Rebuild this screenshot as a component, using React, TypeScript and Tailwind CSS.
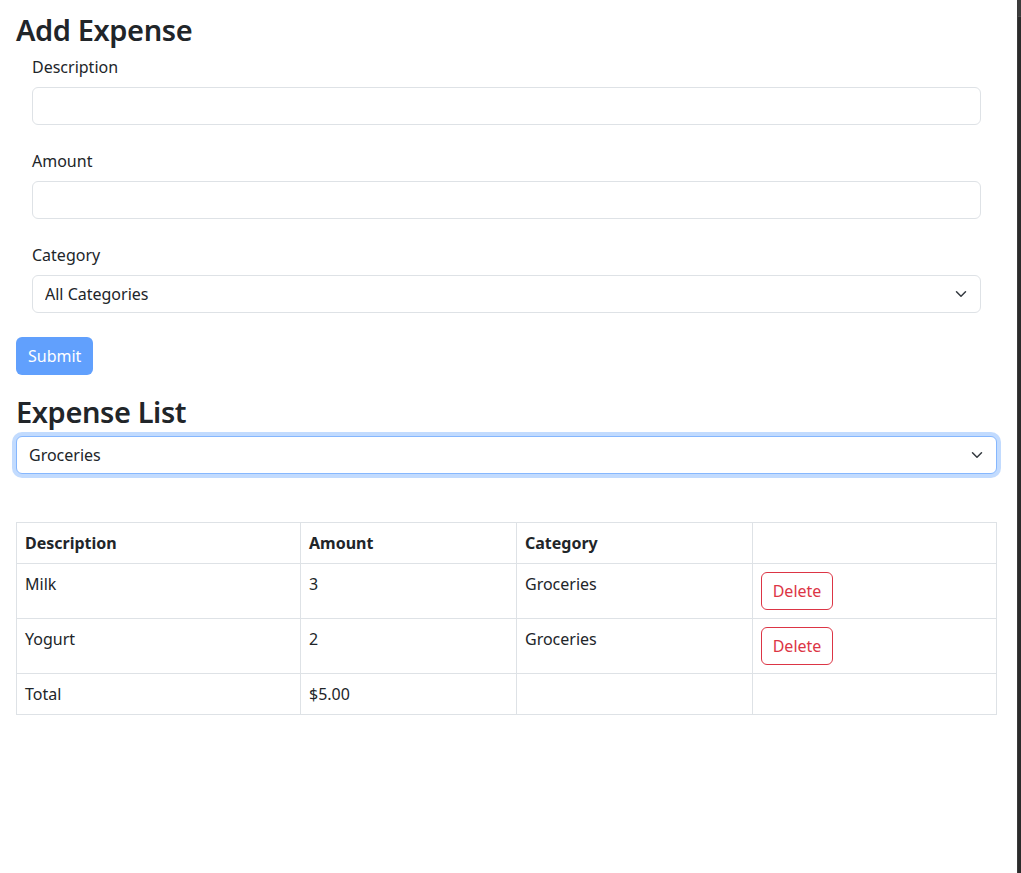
import { useState } from "react";

interface Expense {
  id: number;
  description: string;
  amount: number;
  category: string;
}

const CATEGORIES = ["Groceries", "Utilities", "Entertainment"];

const INITIAL: Expense[] = [
  { id: 1, description: "Milk", amount: 3, category: "Groceries" },
  { id: 2, description: "Yogurt", amount: 2, category: "Groceries" },
];

function Chevron() {
  return (
    <svg
      viewBox="0 0 16 16"
      className="pointer-events-none absolute right-3 top-1/2 -translate-y-1/2 w-4 h-3"
      fill="none"
      stroke="#343a40"
      strokeWidth="2"
      strokeLinecap="round"
      strokeLinejoin="round"
    >
      <path d="m2 5 6 6 6-6" />
    </svg>
  );
}

export default function App() {
  const [expenses, setExpenses] = useState<Expense[]>(INITIAL);
  const [filter, setFilter] = useState("Groceries");

  const visible = expenses.filter((e) => !filter || e.category === filter);
  const total = visible.reduce((acc, e) => acc + e.amount, 0);

  return (
    <div
      className="min-h-[873px] flex bg-white text-[#212529] text-base"
      style={{ fontFamily: '"Noto Sans", "Open Sans", sans-serif' }}
    >
      <div className="flex-1 pl-4 pr-5 pt-[12px]">
        <h2 className="text-[29px] leading-[36.5px] font-semibold tracking-[-0.4px] mb-[6px]">Add Expense</h2>

        <form onSubmit={(e) => e.preventDefault()}>
          <div className="px-4">
            <div className="mb-6">
              <label className="block mb-2 leading-6">Description</label>
              <input className="block w-full h-[38px] border border-[#dee2e6] rounded-[6px] px-3 outline-none" />
            </div>
            <div className="mb-6">
              <label className="block mb-2 leading-6">Amount</label>
              <input className="block w-full h-[38px] border border-[#dee2e6] rounded-[6px] px-3 outline-none" />
            </div>
            <div className="mb-6">
              <label className="block mb-2 leading-6">Category</label>
              <div className="relative">
                <select className="appearance-none block w-full h-[38px] border border-[#dee2e6] rounded-[6px] pl-3 pr-9 bg-white outline-none">
                  <option>All Categories</option>
                  {CATEGORIES.map((c) => <option key={c}>{c}</option>)}
                </select>
                <Chevron />
              </div>
            </div>
          </div>
          <button
            type="submit"
            disabled
            className="h-[38px] px-3 rounded-[6px] bg-[#0d6efd] text-white opacity-65 leading-6"
          >
            Submit
          </button>
        </form>

        <h2 className="text-[29px] leading-[36.5px] font-semibold tracking-[-0.4px] mt-[19px] mb-[6px]">Expense List</h2>

        <div className="relative">
          <select
            value={filter}
            onChange={(e) => setFilter(e.target.value)}
            className="appearance-none block w-full h-[38px] border border-[#86b7fe] rounded-[6px] pl-3 pr-9 bg-white outline-none ring-4 ring-[#0d6efd]/25"
          >
            <option value="">All Categories</option>
            {CATEGORIES.map((c) => <option key={c} value={c}>{c}</option>)}
          </select>
          <Chevron />
        </div>

        <table className="mt-12 w-full table-fixed border-collapse border border-[#dee2e6]">
          <colgroup>
            <col className="w-[284px]" />
            <col className="w-[216px]" />
            <col className="w-[236px]" />
            <col />
          </colgroup>
          <thead>
            <tr className="border-b border-[#dee2e6]">
              <th className="text-left font-bold p-2 leading-6 border-r border-[#dee2e6]">Description</th>
              <th className="text-left font-bold p-2 leading-6 border-r border-[#dee2e6]">Amount</th>
              <th className="text-left font-bold p-2 leading-6 border-r border-[#dee2e6]">Category</th>
              <th className="p-2"></th>
            </tr>
          </thead>
          <tbody>
            {visible.map((e) => (
              <tr key={e.id} className="border-b border-[#dee2e6]">
                <td className="p-2 align-top leading-6 border-r border-[#dee2e6]">{e.description}</td>
                <td className="p-2 align-top leading-6 border-r border-[#dee2e6]">{e.amount}</td>
                <td className="p-2 align-top leading-6 border-r border-[#dee2e6]">{e.category}</td>
                <td className="p-2 align-top">
                  <button
                    onClick={() => setExpenses(expenses.filter((x) => x.id !== e.id))}
                    className="h-[38px] w-[72px] rounded-[6px] border border-[#dc3545] text-[#dc3545] leading-6"
                  >
                    Delete
                  </button>
                </td>
              </tr>
            ))}
            <tr>
              <td className="p-2 leading-6 border-r border-[#dee2e6]">Total</td>
              <td className="p-2 leading-6 border-r border-[#dee2e6]">${total.toFixed(2)}</td>
              <td className="p-2 leading-6 border-r border-[#dee2e6]"></td>
              <td className="p-2"></td>
            </tr>
          </tbody>
        </table>
      </div>

      {/* window edge */}
      <div className="w-[4px] flex flex-col bg-[#2b2b2b] border-l border-[#3a3a3a]">
        <div className="h-[17px] bg-[#3c3c3c] border-b border-[#4a4a4a]" />
      </div>
    </div>
  );
}
